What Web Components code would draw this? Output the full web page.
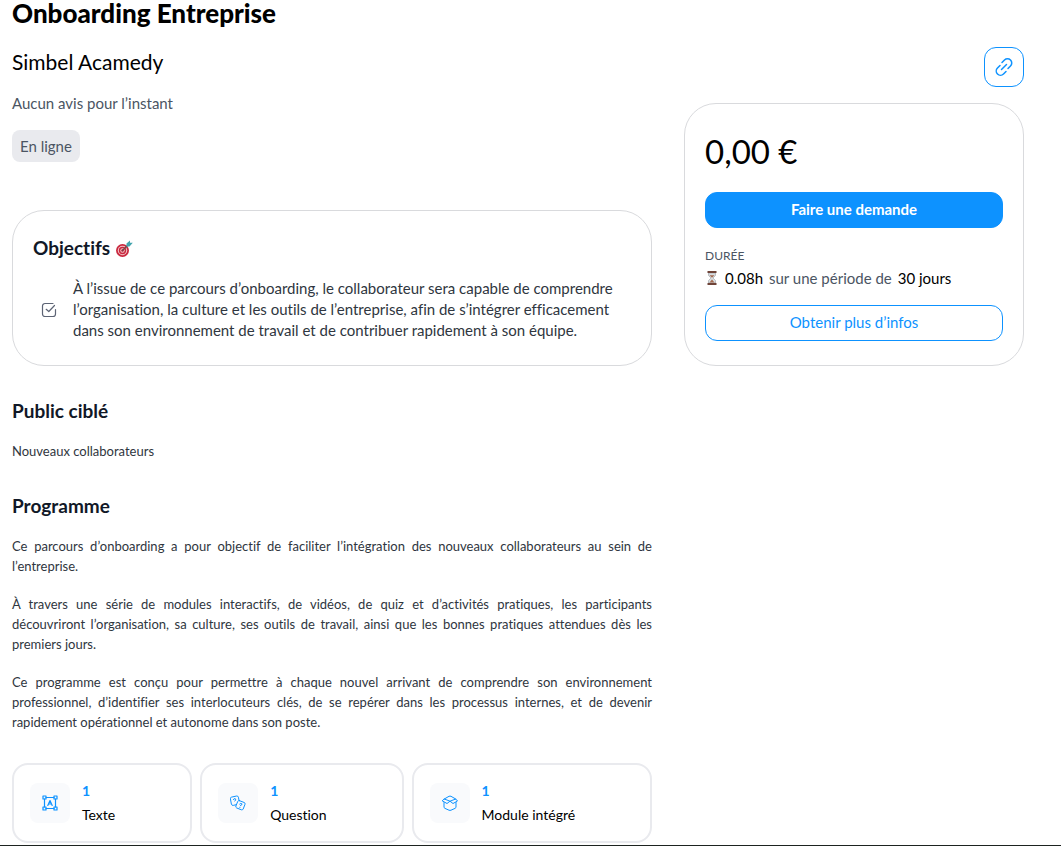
<!DOCTYPE html>
<html lang="fr">
<head>
<meta charset="utf-8">
<title>Onboarding Entreprise</title>
<style>
  body { margin: 0; background: #fff; color: #000; font: 15px/20px Lato, "Open Sans", sans-serif; font-variant-ligatures: none; }
</style>
</head>
<body>
<course-page>
  <course-header slot="main" author="Simbel Acamedy" rating="Aucun avis pour l’instant" mode="En ligne">Onboarding Entreprise</course-header>
  <goal-card slot="main">À l’issue de ce parcours d’onboarding, le collaborateur sera capable de comprendre l’organisation, la culture et les outils de l’entreprise, afin de s’intégrer efficacement dans son environnement de travail et de contribuer rapidement à son équipe.</goal-card>
  <text-section slot="main" heading="Public ciblé"><p>Nouveaux collaborateurs</p></text-section>
  <text-section slot="main" heading="Programme">
    <p>Ce parcours d’onboarding a pour objectif de faciliter l’intégration des nouveaux collaborateurs au sein de l’entreprise.</p>
    <p>À travers une série de modules interactifs, de vidéos, de quiz et d’activités pratiques, les participants découvriront l’organisation, sa culture, ses outils de travail, ainsi que les bonnes pratiques attendues dès les premiers jours.</p>
    <p>Ce programme est conçu pour permettre à chaque nouvel arrivant de comprendre son environnement professionnel, d’identifier ses interlocuteurs clés, de se repérer dans les processus internes, et de devenir rapidement opérationnel et autonome dans son poste.</p>
  </text-section>
  <stat-list slot="main">
    <stat-card icon="text" count="1">Texte</stat-card>
    <stat-card icon="question" count="1">Question</stat-card>
    <stat-card icon="module" count="1">Module intégré</stat-card>
  </stat-list>
  <share-button slot="aside"></share-button>
  <offer-card slot="aside" price="0,00 €" effort="0.08h" period="30 jours"></offer-card>
</course-page>

<script>
const define = (name, render) => customElements.define(name, class extends HTMLElement {
  constructor() {
    super();
    this.attachShadow({ mode: 'open' }).innerHTML = render(this);
  }
});
const attr = (el, name) => el.getAttribute(name) || '';

define('course-page', () => `
  <style>
    :host { display: block; border-bottom: 1px solid #1d2320; }
    .grid { display: grid; grid-template-columns: minmax(0, 1fr) 340px; gap: 32px; padding: 0 37px 2px 12px; align-items: start; }
    aside { display: flex; flex-direction: column; align-items: flex-end; gap: 16px; padding-top: 47px; }
  </style>
  <div class="grid">
    <main><slot name="main"></slot></main>
    <aside><slot name="aside"></slot></aside>
  </div>`);

define('course-header', el => `
  <style>
    :host { display: block; }
    h1 { margin: 0; font-size: 26px; line-height: 26px; font-weight: 900; }
    h2 { margin: 20px 0 0; font-size: 21px; line-height: 32px; font-weight: 400; }
    p { margin: 15px 0 0; color: #4b5563; }
    .tag { display: inline-block; margin-top: 17px; padding: 6px 8px; border-radius: 8px; background: #e9eaee; color: #4b5563; }
  </style>
  <h1><slot></slot></h1>
  <h2>${attr(el, 'author')}</h2>
  <p>${attr(el, 'rating')}</p>
  <span class="tag">${attr(el, 'mode')}</span>`);

define('goal-card', () => `
  <style>
    :host { display: block; margin-top: 48px; padding: 24px 20px; border: 1px solid #d9dadd; border-radius: 32px; }
    h3 { display: flex; align-items: center; gap: 5px; margin: 0; font-size: 19px; line-height: 25px; font-weight: 700; color: #111827; }
    .row { display: flex; align-items: center; gap: 16px; margin-top: 18px; padding: 0 8px; }
    svg { flex: none; }
    p { margin: 0; line-height: 21px; color: #2f3640; }
  </style>
  <h3>Objectifs
    <svg width="18" height="18" viewBox="0 0 18 18" aria-hidden="true">
      <circle cx="7.500" cy="11.500" r="6.500" fill="#c9283e"/><circle cx="7.500" cy="11.500" r="4.700" fill="#f3c9cd"/>
      <circle cx="7.500" cy="11.500" r="3.700" fill="#c9283e"/><circle cx="7.500" cy="11.500" r="2.200" fill="#f3c9cd"/><circle cx="7.500" cy="11.500" r="1.200" fill="#a91d33"/>
      <path d="M7.500 11.500 13 6" stroke="#6b4a48" stroke-width="1.200"/><path d="M11.500 7.500V4.500L15 1.500v2.200h2.800L14.500 7.500Z" fill="#43a5ae"/>
    </svg>
  </h3>
  <div class="row">
    <svg width="16" height="16" viewBox="0 0 16 16" fill="none" stroke="#5d6475" stroke-width="1.200" stroke-linecap="round" stroke-linejoin="round" aria-hidden="true">
      <path d="M14.500 7.500V12a2.500 2.500 0 0 1-2.500 2.500H4A2.500 2.500 0 0 1 1.500 12V4A2.500 2.500 0 0 1 4 1.500h8"/><path d="m5.200 7.300 2.600 2.200L13.500 3.500"/>
    </svg>
    <p><slot></slot></p>
  </div>`);

define('text-section', el => `
  <style>
    :host { display: block; margin-top: 32px; }
    h3 { margin: 0; font-size: 19px; line-height: 25px; font-weight: 700; color: #111827; }
    .copy { display: flex; flex-direction: column; gap: 18px; margin-top: 18px; font-size: 13px; line-height: 20px; color: #2f3640; text-align: justify; }
    ::slotted(p) { margin: 0; }
  </style>
  <h3>${attr(el, 'heading')}</h3>
  <div class="copy"><slot></slot></div>`);

define('stat-list', () => `
  <style>
    :host { display: flex; flex-wrap: wrap; gap: 8px; margin-top: 31px; }
    ::slotted(*) { flex: 1 1 auto; }
  </style>
  <slot></slot>`);

const icons = {
  text: `<g stroke-width="1.200"><path d="M4 2.500h8M4 13.500h8M2.500 4v8M13.500 4v8"/><path d="M1 1h3v3H1ZM12 1h3v3h-3ZM1 12h3v3H1ZM12 12h3v3h-3Z"/><path d="m5.800 10.500 2.200-5 2.200 5M6.600 9h2.800"/></g>`,
  question: `<path d="M5.800 9.800 3.200 10.400Q1.800 10.600 1.400 9.200L.400 3.800Q.200 2.400 1.600 2.100L6.600 1Q8 .800 8.400 2.200L8.900 4.700"/><path d="m9.300 5.600 4.900 1.900Q15.500 8 15 9.300l-1.800 4.700Q12.600 15.200 11.300 14.800l-4.700-1.900Q5.400 12.300 5.900 11l1.900-4.700Q8.300 5.300 9.300 5.600Z"/><path d="M3.400 4.600q.600-1.400 1.900-.900 1.100 1-.4 2.400M9.700 9q1.300-1.200 2.200-.2.500 1.300-1.400 1.800M9.900 12.200v.300"/>`,
  module: `<path d="M2 7.500V12Q2 12.800 2.800 13.300L7 15.200Q8 15.600 9 15.200L13.200 13.300Q14 12.800 14 12V7.500"/><path d="M2.300 4 7 1.300Q8 .900 9 1.300L13.700 4 15.500 6 11 8.500 8 6.200 5 8.500.500 6Z"/><path d="M2.300 4 8 6.200 13.700 4"/>`
};
define('stat-card', el => `
  <style>
    :host { display: flex; align-items: center; gap: 12px; box-sizing: border-box; padding: 16px; border: 2px solid #e9eaee; border-radius: 16px; }
    .icon { display: grid; place-items: center; width: 40px; height: 40px; border-radius: 8px; background: #f9fafc; }
    b { display: block; font-size: 14px; line-height: 20px; font-weight: 700; color: #0d92ff; }
    .name { display: block; margin-top: 4px; font-size: 14px; line-height: 20px; }
  </style>
  <span class="icon"><svg width="16" height="16" viewBox="0 0 16 16" fill="none" stroke="#0d92ff" stroke-linejoin="round" stroke-linecap="round" aria-hidden="true">${icons[attr(el, 'icon')]}</svg></span>
  <span><b>${attr(el, 'count')}</b><span class="name"><slot></slot></span></span>`);

define('share-button', () => `
  <style>
    :host { display: block; }
    button { display: grid; place-items: center; width: 40px; height: 40px; padding: 0; border: 1px solid #0d92ff; border-radius: 12px; background: #fff; }
  </style>
  <button type="button" aria-label="Copier le lien">
    <svg width="20" height="20" viewBox="0 0 20 20" fill="none" stroke="#0d92ff" stroke-width="1.500" stroke-linecap="round"><path d="M8 5.500 10.500 3a4.200 4.200 0 0 1 6 6L14 11.500M12 14.500 9.500 17a4.200 4.200 0 0 1-6-6L6 8.500M7.500 12.500l5-5"/></svg>
  </button>`);

define('offer-card', el => `
  <style>
    :host { display: block; box-sizing: border-box; width: 100%; padding: 24px 20px; border: 1px solid #d9dadd; border-radius: 32px; }
    .price { margin: 0; font-size: 33px; line-height: 46px; }
    button { display: block; width: 100%; height: 36px; padding: 0 0 2px; border: 1px solid #0d92ff; border-radius: 12px; background: #fff; color: #0d92ff; font: inherit; }
    .primary { margin: 18px 0; background: #0d92ff; color: #fff; font-weight: 700; }
    .label { margin: 0; font-size: 12px; line-height: 20px; color: #4b5563; }
    .time { display: flex; align-items: center; gap: 6px; margin: 0 0 15px; line-height: 24px; color: #4b5563; }
    b { font-weight: 400; color: #000; }
  </style>
  <p class="price">${attr(el, 'price')}</p>
  <button class="primary" type="button">Faire une demande</button>
  <p class="label">DURÉE</p>
  <p class="time">
    <svg width="14" height="14" viewBox="0 0 13 14" aria-hidden="true"><path d="M3 2h7v2.500L7.500 7 10 9.500V12H3V9.500L5.500 7 3 4.500Z" fill="#d9dde0" stroke="#9aa0a5" stroke-width=".6"/><path d="M4 4.200h5L6.500 6.800Z" fill="#a36b52"/><path d="M6.500 8.500 9 11.500H4Z" fill="#a36b52"/><path d="M2 0h9v2H2ZM2 12h9v2H2Z" fill="#6f4439"/></svg>
    <b>${attr(el, 'effort')}</b><span>sur une période de</span><b>${attr(el, 'period')}</b>
  </p>
  <button type="button">Obtenir plus d’infos</button>`);
</script>
</body>
</html>
